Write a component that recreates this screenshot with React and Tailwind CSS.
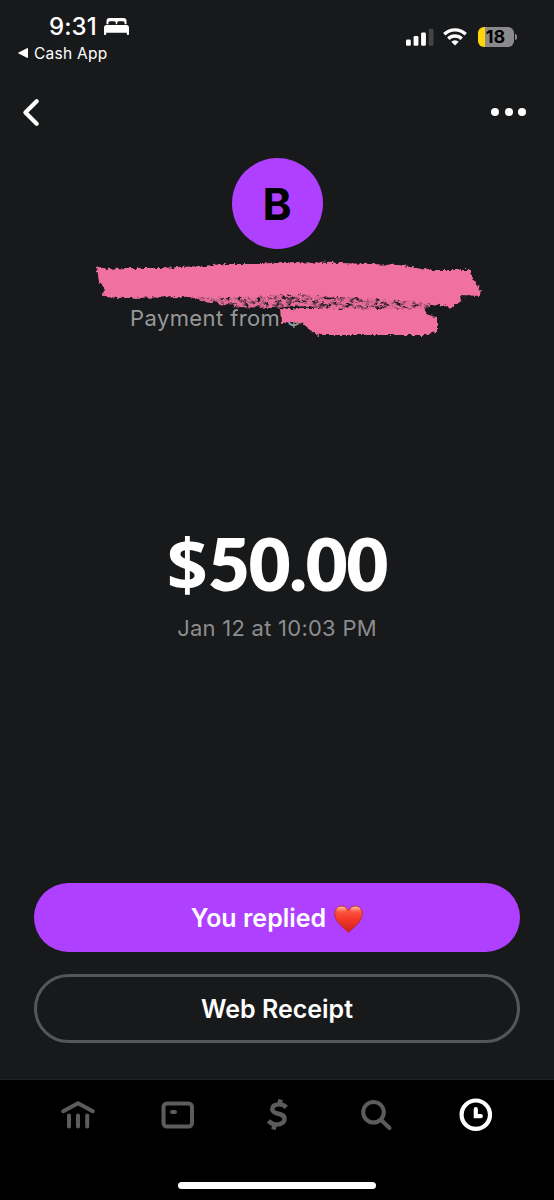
import React from 'react'

function StatusBar() {
    return (
        <header className="flex h-[72px] items-start justify-between text-white font-[Inter,sans-serif]">
            <div className="pt-[11px] pl-[18px]">
                <div className="flex h-[30px] items-center gap-[7px] pl-[31px]">
                    <span className="pt-px text-[24px] leading-none font-medium tracking-[0.1px]">9:31</span>
                    <svg width="25" height="17" viewBox="0 0 25 17" fill="currentColor">
                        <path d="M2.500 6.200V3a3 3 0 0 1 3-3h14a3 3 0 0 1 3 3v3.200h-1.900V4.900a1.600 1.600 0 0 0-1.600-1.600h-4.200a1.600 1.600 0 0 0-1.600 1.600v1.300h-1.400V4.900a1.600 1.600 0 0 0-1.600-1.600H6a1.600 1.600 0 0 0-1.600 1.600v1.300z" />
                        <path d="M0 9.700A2.700 2.700 0 0 1 2.700 7h19.600A2.700 2.700 0 0 1 25 9.700v6.500a.8.8 0 0 1-.8.8h-.6a.8.8 0 0 1-.8-.8v-1.400H2.200v1.400a.8.8 0 0 1-.8.8H.8a.8.8 0 0 1-.8-.8z" />
                    </svg>
                </div>
                <div className="flex h-6 items-center gap-1.5">
                    <svg width="10" height="10" viewBox="0 0 10 10" fill="currentColor">
                        <path d="M.6 4.400 9 .2q1-.4 1 .7v8.200q0 1.100-1 .7L.6 5.600Q-.4 5 .6 4.400z" />
                    </svg>
                    <span className="pt-px text-[15.500px] leading-none tracking-[0.25px]">Cash App</span>
                </div>
            </div>

            <div className="flex items-center pt-[27px] pr-[37px]">
                <svg width="28" height="18" viewBox="0 0 28 18" fill="currentColor">
                    <rect x="0" y="11.500" width="4.800" height="6.200" rx="1.300" />
                    <rect x="7.600" y="8" width="4.800" height="9.700" rx="1.300" />
                    <rect x="15.100" y="4.500" width="4.800" height="13.200" rx="1.300" />
                    <rect x="22.700" y="0.700" width="4.800" height="17" rx="1.300" fill="#434446" />
                </svg>
                <svg className="mr-px ml-[9px]" width="24" height="18" viewBox="0 0 24 18" fill="none" stroke="currentColor" strokeWidth="3.400">
                    <path d="M1.300 6.300a15.200 15.200 0 0 1 21.400 0" />
                    <path d="M5.300 10.700a9.500 9.500 0 0 1 13.400 0" />
                    <path d="M8.300 13.700a5.300 5.300 0 0 1 7.400 0L12 17.500z" fill="currentColor" stroke="none" />
                </svg>
                <div className="ml-[10px] flex h-5 w-9 items-center justify-center overflow-hidden rounded-[6px] bg-linear-to-r from-[#ffd60a] from-[19%] to-[#8a8a8c] to-[19%]">
                    <span className="text-[18px] leading-none font-bold tracking-[-0.1px] text-black">18</span>
                </div>
                <span className="ml-[1.500px] h-[6px] w-[2px] rounded-r-full bg-[#8a8a8c]" />
            </div>
        </header>
    )
}

function Scribble() {
    return (
        <svg className="absolute top-[9px] left-[90px]" width="400" height="82" viewBox="90 258 400 82">
            <defs>
                <filter id="rough" x="-5%" y="-20%" width="110%" height="140%">
                    <feTurbulence type="fractalNoise" baseFrequency="0.25" numOctaves="2" seed="4" result="n" />
                    <feDisplacementMap in="SourceGraphic" in2="n" scale="6" xChannelSelector="R" yChannelSelector="G" />
                    <feGaussianBlur stdDeviation="0.600" />
                </filter>
                <filter id="grain" x="-5%" y="-20%" width="110%" height="140%">
                    <feTurbulence type="fractalNoise" baseFrequency="0.16 0.3" numOctaves="3" seed="9" result="n" />
                    <feColorMatrix in="n" type="matrix" values="0 0 0 0 0  0 0 0 0 0  0 0 0 0 0  4 0 0 0 -1.150" result="m" />
                    <feComposite in="SourceGraphic" in2="m" operator="in" result="g" />
                    <feDisplacementMap in="g" in2="n" scale="5" xChannelSelector="R" yChannelSelector="G" />
                    <feGaussianBlur stdDeviation="0.700" />
                </filter>
            </defs>
            <path
                filter="url(#grain)"
                fill="#e56c98"
                d="M180 294 L430 294 L432 305 L415 313 L330 313 L310 306 L270 308 L240 307 L205 302z"
            />
            <path
                filter="url(#rough)"
                fill="#f0719f"
                d="M96 266 L104 269 L130 268 L160 268 L200 266 L225 264 L260 264 L280 262 L340 263 L398 265 L428 270 L470 270 L474 281 L481 290 L480 296 L460 295 L461 301 L452 308 L440 305 L424 303 L400 301 L340 297 L290 295 L230 298 L190 297 L125 298 L103 297 L104 287 L98 282z"
            />
            <path
                filter="url(#rough)"
                fill="#f0719f"
                d="M280 308 L290 309 L330 309 L424 309 L428 315 L437 317 L437 332 L425 335 L380 335 L320 335 L311 331 L304 324 L299 322 L290 322 L281 323z"
            />
        </svg>
    )
}

function Heart() {
    return (
        <svg width="29" height="28" viewBox="0 0 29 28">
            <defs>
                <linearGradient id="heart" x1="0" y1="0" x2="0" y2="1">
                    <stop offset="0" stopColor="#ff6a50" />
                    <stop offset="0.450" stopColor="#f83b2c" />
                    <stop offset="1" stopColor="#c9201c" />
                </linearGradient>
                <linearGradient id="shine" x1="0" y1="0" x2="0" y2="1">
                    <stop offset="0" stopColor="#ffc3a5" />
                    <stop offset="1" stopColor="#ff6a50" stopOpacity="0" />
                </linearGradient>
            </defs>
            <path
                d="M14.500 27.500C10 23 .7 17 .7 8.600.7 4.200 3.700 1 7.600 1c3.200 0 5.600 1.800 6.900 4.500C15.800 2.800 18.200 1 21.400 1c3.900 0 6.900 3.200 6.900 7.600C28.300 17 19 23 14.500 27.500z"
                fill="url(#heart)"
                stroke="#b3241f"
                strokeWidth="0.700"
            />
            <ellipse cx="7.500" cy="5" rx="4.800" ry="3.200" fill="url(#shine)" />
            <ellipse cx="21.500" cy="5" rx="4.800" ry="3.200" fill="url(#shine)" />
        </svg>
    )
}

function TabBar() {
    return (
        <nav className="flex h-[121px] flex-col items-center justify-between border-t border-[#202123] bg-black pb-[11px]">
            <div className="flex h-[69px] w-full items-center justify-between px-[60px] text-[#5c5c5c]">
                <svg width="36" height="36" viewBox="0 0 36 36" fill="none" stroke="currentColor" strokeWidth="4" strokeLinecap="round" strokeLinejoin="round">
                    <path d="M3.200 14.200 18 6.200l14.800 8" />
                    <path d="M9 18.500v11M18 18.500v11M27.200 18.500v11" />
                </svg>
                <svg width="36" height="36" viewBox="0 0 36 36" fill="none" stroke="currentColor" strokeWidth="4" strokeLinecap="round">
                    <rect x="3.500" y="6.500" width="28.500" height="23" rx="3.500" />
                    <path d="M12 15.100h3" />
                </svg>
                <svg width="36" height="36" viewBox="0 0 36 36" fill="none" stroke="currentColor" strokeWidth="4.500" strokeLinejoin="round">
                    <path d="M27.300 10.300c-2.300-2.300-5.300-3.200-8.300-2.900-3.400.3-5.700 2.100-5.700 4.800 0 6.200 12.200 2.800 12.200 9.500 0 3.700-3.500 5.900-7.600 5.800-3.300 0-6-1.200-8.500-3.700" />
                    <path d="M20.500 7.500l1-5M15.500 27.500l-1 5" />
                </svg>
                <svg width="36" height="36" viewBox="0 0 36 36" fill="none" stroke="currentColor" strokeWidth="4" strokeLinecap="round">
                    <circle cx="14.500" cy="15.200" r="10.300" />
                    <path d="M22.500 23.200l8 7.800" />
                </svg>
                <svg className="text-white" width="36" height="36" viewBox="0 0 36 36" fill="none" stroke="currentColor" strokeWidth="4.200" strokeLinecap="round">
                    <circle cx="17.800" cy="17.700" r="14.200" />
                    <path d="M17.800 12.200v7h5" />
                </svg>
            </div>
            <div className="h-[7px] w-[198px] rounded-full bg-white" />
        </nav>
    )
}

export default function App() {
    return (
        <div className="flex h-[1200px] w-[554px] flex-col overflow-hidden bg-[#18191b] font-[Inter,sans-serif] select-none">
            <StatusBar />

            <div className="flex h-20 items-center justify-between pr-7 pl-[21px] text-white">
                <svg width="20" height="30" viewBox="0 0 20 30" fill="none" stroke="currentColor" strokeWidth="4.200" strokeLinecap="round" strokeLinejoin="round">
                    <path d="M15.700 4.200 4.400 15.500l11.300 11.300" />
                </svg>
                <div className="flex gap-[5.500px]">
                    <span className="size-2 rounded-full bg-white" />
                    <span className="size-2 rounded-full bg-white" />
                    <span className="size-2 rounded-full bg-white" />
                </div>
            </div>

            <section className="flex flex-col items-center pt-1.5">
                <div className="flex size-[91px] items-center justify-center rounded-full bg-[#b040ff]">
                    <span className="text-[44px] leading-none font-bold text-black">B</span>
                </div>
                <div className="relative h-[98px] w-full pt-[57px] pl-[130px]">
                    <p className="text-[22px] leading-[24px] tracking-[0.4px] whitespace-nowrap text-[#96989a]">Payment from $</p>
                    <Scribble />
                </div>
            </section>

            <section className="flex flex-1 flex-col items-center pt-[180px]">
                <h1 className="flex text-[72px] leading-[72px] font-bold text-white">
                    <span className="font-['Noto_Sans',sans-serif]">$</span>
                    <span className="font-[Lato,sans-serif] font-extrabold tracking-[-1px]">50.00</span>
                </h1>
                <p className="mt-[15px] text-[22px] leading-[28px] tracking-[0.25px] text-[#8c8d8e]">Jan 12 at 10:03 PM</p>
            </section>

            <section className="flex flex-col gap-[22px] px-[34px] pb-[36px] text-[25px] font-semibold text-white">
                <button className="flex h-[69px] items-center justify-center gap-2 rounded-full bg-[#b040ff] pt-0.5">
                    You replied
                    <Heart />
                </button>
                <button className="h-[69px] rounded-full border-[3px] border-[#555657] pt-[3px]">Web Receipt</button>
            </section>

            <TabBar />
        </div>
    )
}
